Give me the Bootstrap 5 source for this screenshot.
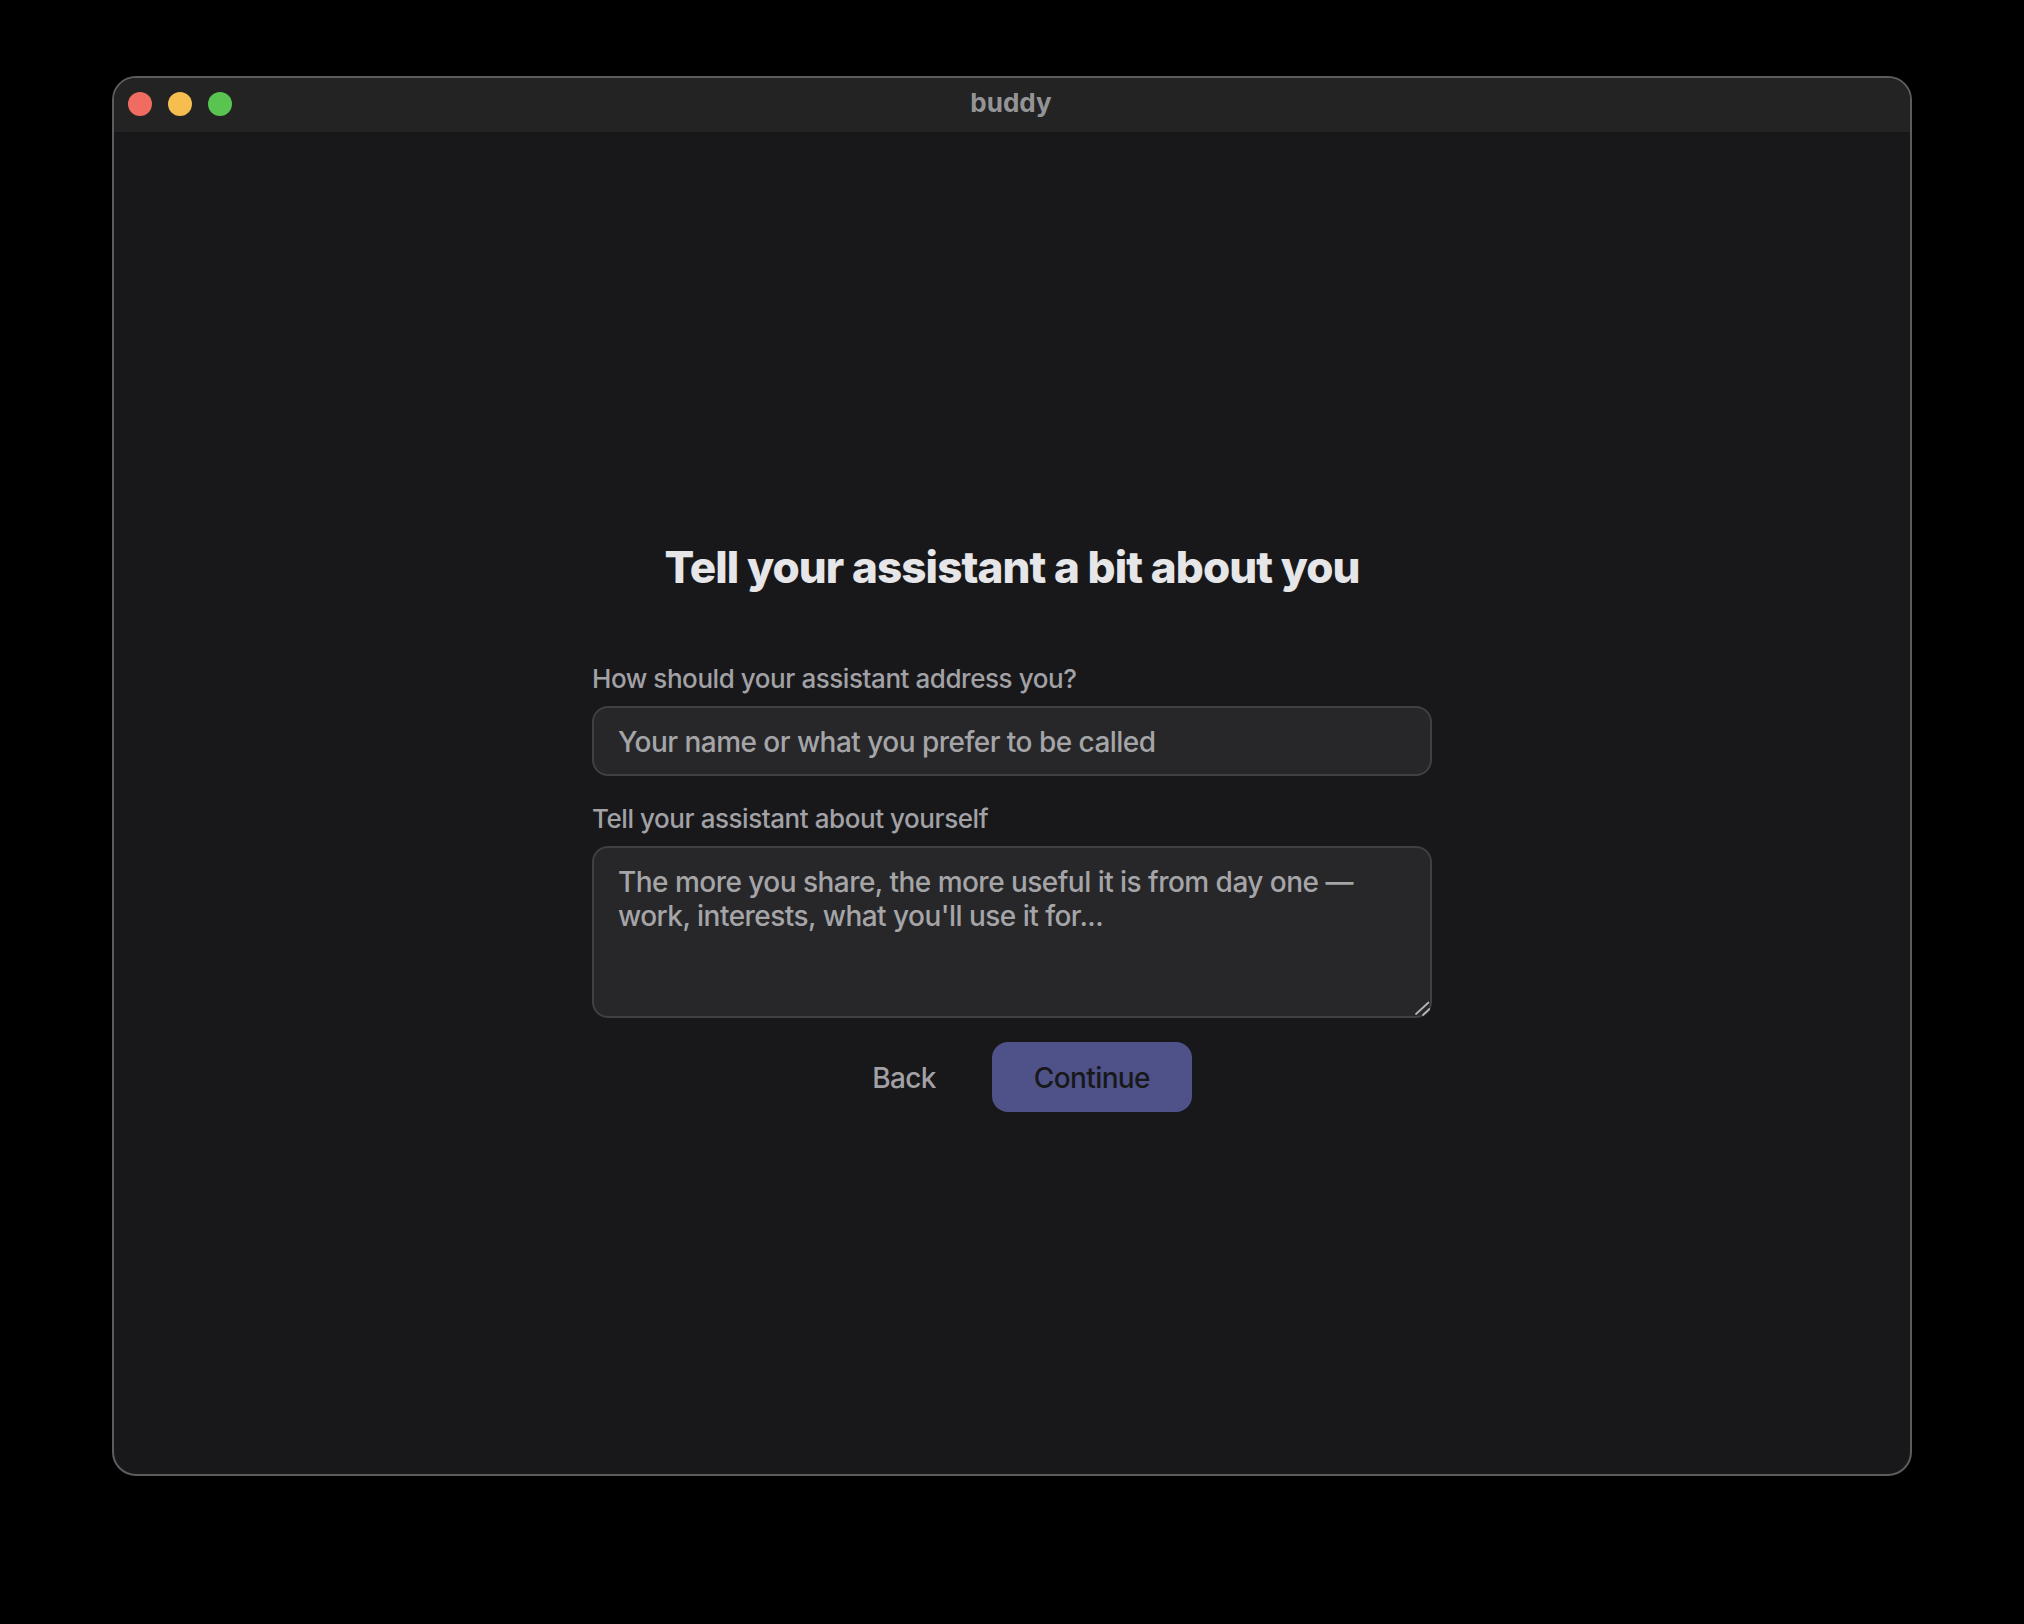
<!DOCTYPE html>
<html lang="en" data-bs-theme="dark">
<head>
    <meta charset="UTF-8">
    <meta name="viewport" content="width=device-width, initial-scale=1.0">
    <title>buddy</title>
    <link href="https://cdn.jsdelivr.net/npm/bootstrap@5.3.0/dist/css/bootstrap.min.css" rel="stylesheet">
    <style>
        body { background: #000; font-family: Inter, "Liberation Sans", sans-serif; padding-top: 76px; }
        .app-window { width: 1800px; height: 1400px; background: #18181a; border: 2px solid #5c5c5e; border-radius: 24px; overflow: hidden; }
        .titlebar { height: 54px; background: #232323; padding: 0 0 2px 14px; }
        .dots { gap: 16px; }
        .dot { width: 24px; height: 24px; border-radius: 50%; }
        .dot-red { background: #f16c60; }
        .dot-yellow { background: #f6bd4f; }
        .dot-green { background: #5ac451; }
        .titlebar-name { left: 0; right: 0; top: 0; font-size: 26px; font-weight: 700; color: #949496; line-height: 50px; padding-right: 2px; }
        .content { padding-top: 46px; }
        .form-box { width: 840px; }
        h1.page-title { font-size: 44px; font-weight: 800; color: #e6e6e8; letter-spacing: -0.94px; line-height: 53px; margin-bottom: 67px; }
        .field-label { font-size: 26px; font-weight: 450; color: #a1a1a6; letter-spacing: -0.44px; line-height: 36px; margin-bottom: 9px; }
        .form-control.field { background: #27272a; border: 2px solid #3f3f44; border-radius: 16px; color: #e8e8ea; font-size: 28px; font-weight: 450; letter-spacing: -0.53px; line-height: 34px; padding: 17px 24px 15px; box-shadow: none; }
        .form-control.field::placeholder { color: #a5a5a8; }
        input.field { height: 70px; margin-bottom: 25px; }
        textarea.field { height: 172px; resize: none; }
        .grip { right: 2px; bottom: 2px; width: 16px; height: 16px; pointer-events: none; }
        .actions { margin-top: 24px; gap: 16px; }
        .btn.back { font-size: 28px; font-weight: 450; letter-spacing: -0.6px; color: #a1a1a6; border: 0; padding: 2px 40px 0; height: 70px; }
        .btn.continue { width: 200px; height: 70px; font-size: 28px; font-weight: 450; letter-spacing: -0.6px; background: #4f5288; color: #18181b; border: 0; border-radius: 16px; padding-top: 8px; }
    </style>
</head>
<body>
    <div class="app-window mx-auto d-flex flex-column">
        <div class="titlebar d-flex align-items-center position-relative flex-shrink-0">
            <div class="dots d-flex">
                <span class="dot dot-red"></span>
                <span class="dot dot-yellow"></span>
                <span class="dot dot-green"></span>
            </div>
            <div class="titlebar-name position-absolute text-center">buddy</div>
        </div>
        <div class="content flex-grow-1 d-flex flex-column align-items-center justify-content-center">
            <h1 class="page-title text-center">Tell your assistant a bit about you</h1>
            <form class="form-box">
                <label class="field-label d-block" for="name">How should your assistant address you?</label>
                <input class="form-control field" id="name" type="text" placeholder="Your name or what you prefer to be called">
                <label class="field-label d-block" for="about">Tell your assistant about yourself</label>
                <div class="position-relative">
                    <textarea class="form-control field" id="about" placeholder="The more you share, the more useful it is from day one — work, interests, what you'll use it for..."></textarea>
                    <svg class="grip position-absolute" viewBox="0 0 16 16" fill="none" stroke="#b4b4b6" stroke-width="1.8" stroke-linecap="round">
                        <path d="M2 14L14.5 2.5"/>
                        <path d="M9 15L15.5 9"/>
                    </svg>
                </div>
                <div class="actions d-flex justify-content-center">
                    <button type="button" class="btn back">Back</button>
                    <button type="button" class="btn continue">Continue</button>
                </div>
            </form>
        </div>
    </div>
    <script src="https://cdn.jsdelivr.net/npm/bootstrap@5.3.0/dist/js/bootstrap.bundle.min.js"></script>
</body>
</html>
